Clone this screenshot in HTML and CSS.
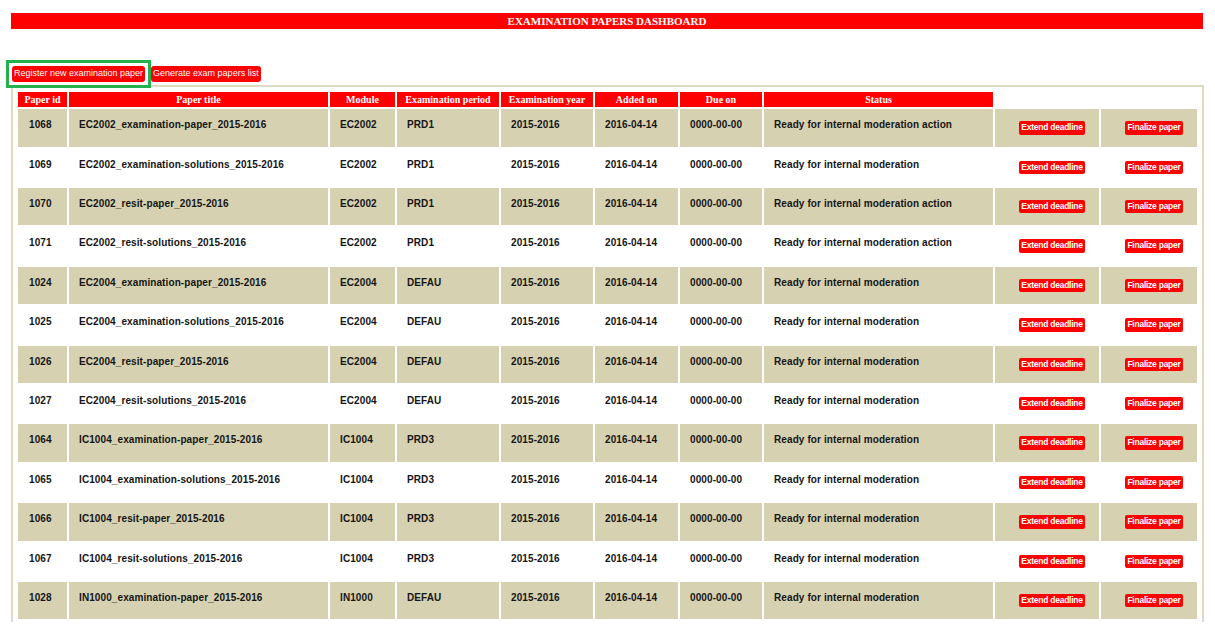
FILE: index.html
```html
<!DOCTYPE html>
<html>
<head>
<meta charset="utf-8">
<title>Examination papers dashboard</title>
<link rel="stylesheet" href="styles.css">
</head>
<body>
<div class="page">
  <div class="titlebar">EXAMINATION PAPERS DASHBOARD</div>
  <div class="toolbar">
    <a class="btn btn-top btn-highlight" href="#">Register new examination paper</a>
    <a class="btn btn-top" href="#">Generate exam papers list</a>
  </div>
  <div class="panel">
    <table class="papers">
      <thead>
        <tr>
          <th class="c-id">Paper id</th>
          <th class="c-title">Paper title</th>
          <th class="c-mod">Module</th>
          <th class="c-per">Examination period</th>
          <th class="c-year">Examination year</th>
          <th class="c-add">Added on</th>
          <th class="c-due">Due on</th>
          <th class="c-status">Status</th>
          <th class="c-ext blank"></th>
          <th class="c-fin blank"></th>
        </tr>
      </thead>
      <tbody>
        <tr class="odd"><td class="id">1068</td><td>EC2002_examination-paper_2015-2016</td><td>EC2002</td><td>PRD1</td><td>2015-2016</td><td>2016-04-14</td><td>0000-00-00</td><td>Ready for internal moderation action</td><td class="act"><a class="btn btn-sm" href="#">Extend deadline</a></td><td class="act"><a class="btn btn-sm" href="#">Finalize paper</a></td></tr>
        <tr><td class="id">1069</td><td>EC2002_examination-solutions_2015-2016</td><td>EC2002</td><td>PRD1</td><td>2015-2016</td><td>2016-04-14</td><td>0000-00-00</td><td>Ready for internal moderation</td><td class="act"><a class="btn btn-sm" href="#">Extend deadline</a></td><td class="act"><a class="btn btn-sm" href="#">Finalize paper</a></td></tr>
        <tr class="odd"><td class="id">1070</td><td>EC2002_resit-paper_2015-2016</td><td>EC2002</td><td>PRD1</td><td>2015-2016</td><td>2016-04-14</td><td>0000-00-00</td><td>Ready for internal moderation action</td><td class="act"><a class="btn btn-sm" href="#">Extend deadline</a></td><td class="act"><a class="btn btn-sm" href="#">Finalize paper</a></td></tr>
        <tr><td class="id">1071</td><td>EC2002_resit-solutions_2015-2016</td><td>EC2002</td><td>PRD1</td><td>2015-2016</td><td>2016-04-14</td><td>0000-00-00</td><td>Ready for internal moderation action</td><td class="act"><a class="btn btn-sm" href="#">Extend deadline</a></td><td class="act"><a class="btn btn-sm" href="#">Finalize paper</a></td></tr>
        <tr class="odd"><td class="id">1024</td><td>EC2004_examination-paper_2015-2016</td><td>EC2004</td><td>DEFAU</td><td>2015-2016</td><td>2016-04-14</td><td>0000-00-00</td><td>Ready for internal moderation</td><td class="act"><a class="btn btn-sm" href="#">Extend deadline</a></td><td class="act"><a class="btn btn-sm" href="#">Finalize paper</a></td></tr>
        <tr><td class="id">1025</td><td>EC2004_examination-solutions_2015-2016</td><td>EC2004</td><td>DEFAU</td><td>2015-2016</td><td>2016-04-14</td><td>0000-00-00</td><td>Ready for internal moderation</td><td class="act"><a class="btn btn-sm" href="#">Extend deadline</a></td><td class="act"><a class="btn btn-sm" href="#">Finalize paper</a></td></tr>
        <tr class="odd"><td class="id">1026</td><td>EC2004_resit-paper_2015-2016</td><td>EC2004</td><td>DEFAU</td><td>2015-2016</td><td>2016-04-14</td><td>0000-00-00</td><td>Ready for internal moderation</td><td class="act"><a class="btn btn-sm" href="#">Extend deadline</a></td><td class="act"><a class="btn btn-sm" href="#">Finalize paper</a></td></tr>
        <tr><td class="id">1027</td><td>EC2004_resit-solutions_2015-2016</td><td>EC2004</td><td>DEFAU</td><td>2015-2016</td><td>2016-04-14</td><td>0000-00-00</td><td>Ready for internal moderation</td><td class="act"><a class="btn btn-sm" href="#">Extend deadline</a></td><td class="act"><a class="btn btn-sm" href="#">Finalize paper</a></td></tr>
        <tr class="odd"><td class="id">1064</td><td>IC1004_examination-paper_2015-2016</td><td>IC1004</td><td>PRD3</td><td>2015-2016</td><td>2016-04-14</td><td>0000-00-00</td><td>Ready for internal moderation</td><td class="act"><a class="btn btn-sm" href="#">Extend deadline</a></td><td class="act"><a class="btn btn-sm" href="#">Finalize paper</a></td></tr>
        <tr><td class="id">1065</td><td>IC1004_examination-solutions_2015-2016</td><td>IC1004</td><td>PRD3</td><td>2015-2016</td><td>2016-04-14</td><td>0000-00-00</td><td>Ready for internal moderation</td><td class="act"><a class="btn btn-sm" href="#">Extend deadline</a></td><td class="act"><a class="btn btn-sm" href="#">Finalize paper</a></td></tr>
        <tr class="odd"><td class="id">1066</td><td>IC1004_resit-paper_2015-2016</td><td>IC1004</td><td>PRD3</td><td>2015-2016</td><td>2016-04-14</td><td>0000-00-00</td><td>Ready for internal moderation</td><td class="act"><a class="btn btn-sm" href="#">Extend deadline</a></td><td class="act"><a class="btn btn-sm" href="#">Finalize paper</a></td></tr>
        <tr><td class="id">1067</td><td>IC1004_resit-solutions_2015-2016</td><td>IC1004</td><td>PRD3</td><td>2015-2016</td><td>2016-04-14</td><td>0000-00-00</td><td>Ready for internal moderation</td><td class="act"><a class="btn btn-sm" href="#">Extend deadline</a></td><td class="act"><a class="btn btn-sm" href="#">Finalize paper</a></td></tr>
        <tr class="odd"><td class="id">1028</td><td>IN1000_examination-paper_2015-2016</td><td>IN1000</td><td>DEFAU</td><td>2015-2016</td><td>2016-04-14</td><td>0000-00-00</td><td>Ready for internal moderation</td><td class="act"><a class="btn btn-sm" href="#">Extend deadline</a></td><td class="act"><a class="btn btn-sm" href="#">Finalize paper</a></td></tr>
      </tbody>
    </table>
  </div>
</div>
</body>
</html>
```

FILE: styles.css
```css
html, body {
  margin: 0;
  padding: 0;
  background: #ffffff;
}

.page {
  padding: 13px 11px 0 11px;
  font-family: "Liberation Sans", Arial, sans-serif;
}

.titlebar {
  margin-right: 1px;
  height: 16px;
  line-height: 16px;
  background: #ff0000;
  color: #ffffff;
  text-align: center;
  font-family: "Liberation Serif", "Times New Roman", serif;
  font-weight: bold;
  font-size: 11px;
}

.toolbar {
  display: flex;
  gap: 6px;
  margin-top: 37px;
  padding-left: 1px;
}

.btn {
  display: inline-block;
  background: #ff0000;
  color: #ffffff;
  text-decoration: none;
  font-family: "Liberation Sans", Arial, sans-serif;
  white-space: nowrap;
}

.btn-top {
  font-size: 9px;
  line-height: 11.5px;
  padding: 2px 2px;
  border-radius: 3px;
}

.btn-highlight {
  position: relative;
}

.btn-highlight::after {
  content: "";
  position: absolute;
  top: -6px;
  left: -6px;
  right: -6px;
  bottom: -6px;
  border: 3px solid #22b14c;
  pointer-events: none;
}

.btn-sm {
  font-size: 8.5px;
  letter-spacing: -0.25px;
  line-height: 11px;
  padding: 1px 2px 1.4px 2px;
  border-radius: 2px;
  vertical-align: middle;
}

.panel {
  margin-top: 3px;
  border: 2px solid #dfdac3;
  border-bottom: none;
  padding: 3.5px 2px 1px 3px;
}

.papers {
  table-layout: fixed;
  width: 1183px;
  border-collapse: separate;
  border-spacing: 2px;
}

.papers th {
  background: #ff0000;
  color: #ffffff;
  font-family: "Liberation Serif", "Times New Roman", serif;
  font-weight: bold;
  font-size: 10px;
  height: 15.3px;
  line-height: 12px;
  padding: 0;
  text-align: center;
  vertical-align: middle;
}

.papers th.blank {
  background: transparent;
}

.c-id { width: 49px; }
.c-title { width: 259px; }
.c-mod { width: 65px; }
.c-per { width: 102px; }
.c-year { width: 92px; }
.c-add { width: 83px; }
.c-due { width: 82px; }
.c-status { width: 229px; }
.c-ext { width: 104px; }
.c-fin { width: 96px; }

.papers td {
  box-sizing: border-box;
  height: 37.4px;
  padding: 10px 4px 0 10px;
  vertical-align: top;
  font-size: 10px;
  font-weight: bold;
  letter-spacing: 0.1px;
  color: #151515;
  white-space: nowrap;
  overflow: hidden;
}

.papers td.id {
  padding-left: 11px;
}

.papers td.act {
  padding: 0 0 0 10px;
  letter-spacing: 0;
  text-align: center;
  vertical-align: middle;
}

.papers tr.odd td {
  background: #d6d1b1;
}
```
